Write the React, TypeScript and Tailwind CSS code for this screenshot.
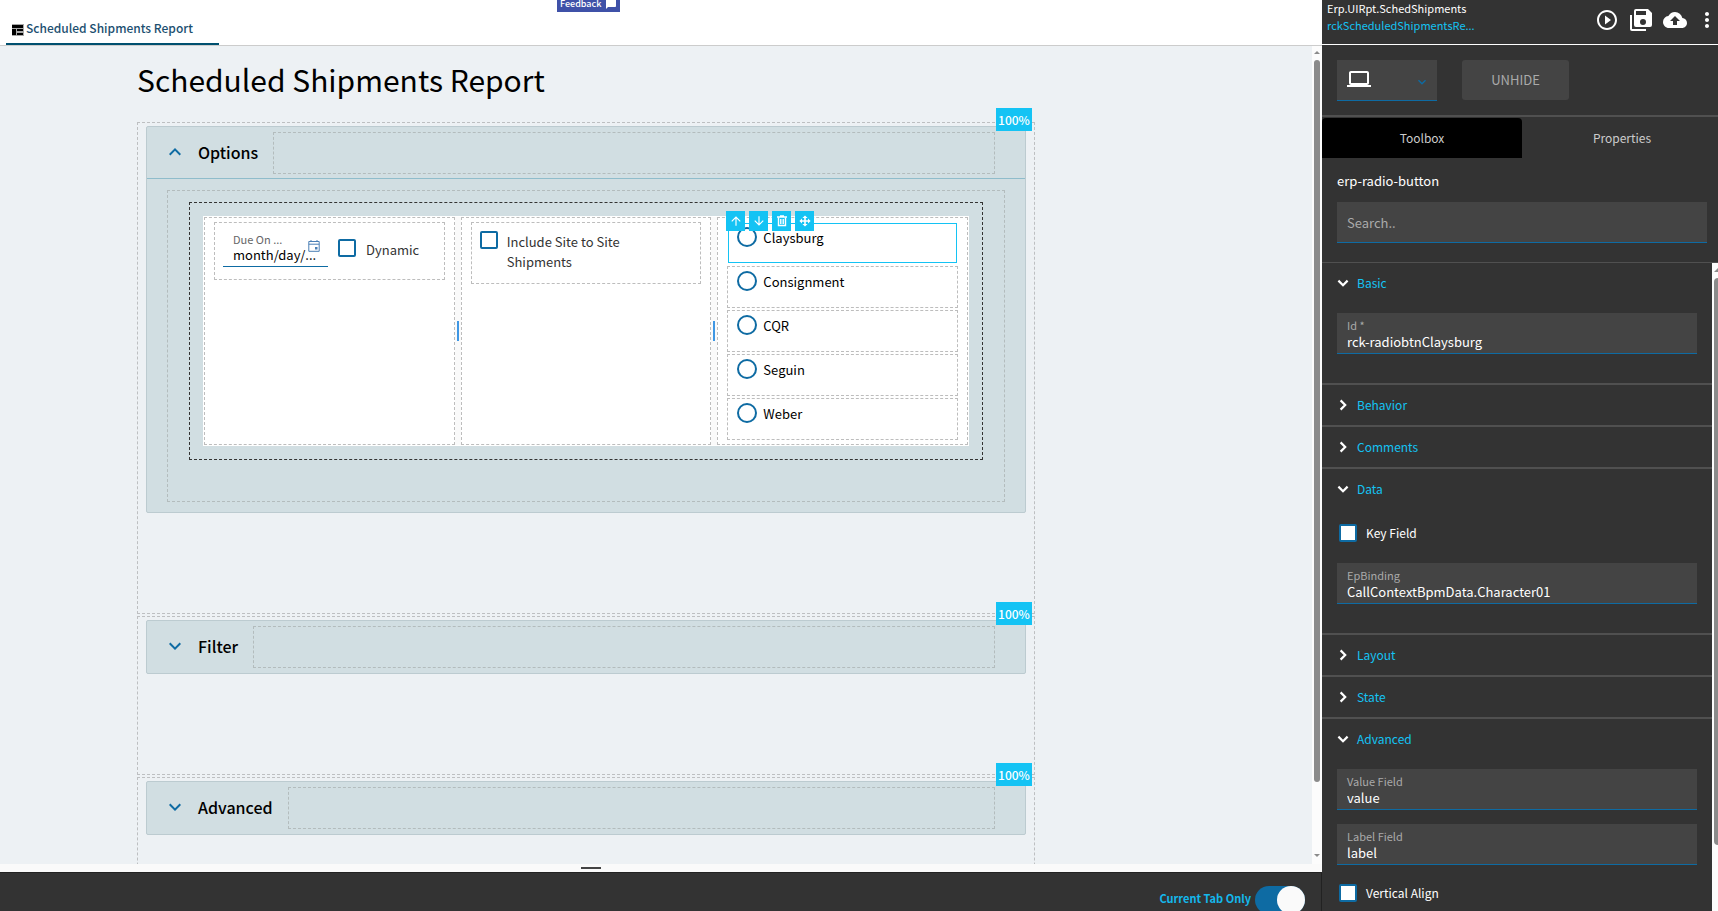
import type { ReactNode } from "react";
import {
    MdArrowDownward,
    MdArrowUpward,
    MdChatBubble,
    MdCloudUpload,
    MdExpandLess,
    MdExpandMore,
    MdLaptop,
    MdMoreVert,
    MdPlayCircleOutline,
} from "react-icons/md";

const sites = ["Claysburg", "Consignment", "CQR", "Seguin", "Weber"];

const checkboxClass = "h-[18px] w-[18px] shrink-0 appearance-none rounded-[2px] border-2 border-[#0e6ba3] bg-white";

function Chevron({ open }: { open: boolean }) {
    return (
        <svg viewBox="0 0 12 12" className="h-3 w-3 text-white" fill="none" stroke="currentColor" strokeWidth="2.2">
            <path d={open ? "M1.4 3.6L6 8.2l4.6-4.6" : "M3.6 1.4L8.2 6l-4.6 4.6"} />
        </svg>
    );
}

function Badge() {
    return (
        <span className="absolute -top-[15px] right-[2px] flex h-[23px] w-9 items-center justify-center bg-[#14c3f4] text-xs font-medium text-white">
            100%
        </span>
    );
}

function Card({ title, children }: { title: string; children?: ReactNode }) {
    const Icon = children ? MdExpandLess : MdExpandMore;
    return (
        <section className="relative mb-0.5 border border-dashed border-[#bdbfc1] px-2 pt-[3px] pb-[100px]">
            <div className="rounded-[2px] border border-[#bccbd0] bg-[#d1dee2]">
                <div className={children ? "flex h-[52px] border-b border-[#8fbccb] pt-[5px] pr-[30px]" : "flex h-[52px] pt-[5px] pr-[30px]"}>
                    <button type="button" className="flex h-10 items-center pl-4 text-base font-medium text-black">
                        <Icon className="mr-[11px] h-6 w-6 text-[#0e6ba3]" />
                        {title}
                    </button>
                    <div className="ml-[15px] h-[42px] flex-1 border border-dashed border-[#b3bcbd]" />
                </div>
                {children}
            </div>
            <Badge />
        </section>
    );
}

function Splitter() {
    return (
        <div className="flex w-[6px] items-center justify-center bg-[#fafafa]">
            <div className="h-5 w-0.5 bg-[#3f97e4]" />
        </div>
    );
}

function SiteToolbar() {
    const button = "flex h-5 w-[19px] items-center justify-center bg-[#14c3f4] text-white";
    return (
        <div className="absolute -top-[13px] -left-[3px] flex gap-1">
            <button type="button" aria-label="Move up" className={button}>
                <MdArrowUpward className="h-[14px] w-[14px]" />
            </button>
            <button type="button" aria-label="Move down" className={button}>
                <MdArrowDownward className="h-[14px] w-[14px]" />
            </button>
            <button type="button" aria-label="Delete" className={button}>
                <svg viewBox="0 0 12 12" className="h-3 w-3" fill="none" stroke="currentColor">
                    <path d="M1 2h10M4 1h4" strokeWidth="1.4" />
                    <path d="M2.5 2.5v8h7v-8" strokeWidth="1.4" />
                    <path d="M4.5 4v5M6 4v5M7.5 4v5" strokeWidth="0.9" />
                </svg>
            </button>
            <button type="button" aria-label="Drag" className={button}>
                <svg viewBox="0 0 12 12" className="h-3 w-3" fill="currentColor">
                    <path d="M6 0.4L8.6 3H6.8v2.2H9V3.4L11.6 6 9 8.6V6.8H6.8V9h1.8L6 11.6 3.4 9h1.8V6.8H3v1.8L0.4 6 3 3.4v1.8h2.2V3H3.4z" />
                </svg>
            </button>
        </div>
    );
}

function OptionsBody() {
    const column = "flex-1 border border-dashed border-[#bdbdbd] px-[9px] py-1";
    return (
        <div className="mx-5 mt-[11px] mb-[10px] border border-dashed border-[#b3bcbd] px-[21px] pt-[11px] pb-[41px]">
            <div className="border border-dashed border-[#333] p-[13px]">
                <div className="flex bg-white p-px text-[13px] leading-5 text-[#333]">
                    <div className={column}>
                        <div className="flex h-[58px] border border-dashed border-[#bdbdbd] pl-2">
                            <div className="relative h-11 w-[105px] border-b border-[#0e6ba3] pt-2 pl-[10px]">
                                <label htmlFor="dueOn" className="block text-[11px] leading-4 text-[#666]">
                                    Due On ...
                                </label>
                                <input
                                    id="dueOn"
                                    placeholder="month/day/..."
                                    className="block h-4 w-full bg-transparent text-[13px] placeholder:text-black"
                                />
                                <svg viewBox="0 0 12 12" className="absolute top-[17px] right-2 h-3 w-3 text-[#4a7fb5]" fill="none" stroke="currentColor">
                                    <path d="M0.8 1.5h10.4v9.8H0.8zM0.8 4.2h10.4M3 0v2M9 0v2" />
                                    <path d="M7 7h2.5v2.5H7z" fill="currentColor" stroke="none" />
                                </svg>
                            </div>
                            <label className="ml-[10px] flex items-start pt-4">
                                <input type="checkbox" className={checkboxClass} />
                                <span className="mt-px ml-[10px]">Dynamic</span>
                            </label>
                        </div>
                    </div>
                    <Splitter />
                    <div className={column}>
                        <label className="flex h-[62px] items-start border border-dashed border-[#bdbdbd] pt-2 pr-10 pl-2">
                            <input type="checkbox" className={checkboxClass} />
                            <span className="mt-px ml-[9px]">Include Site to Site Shipments</span>
                        </label>
                    </div>
                    <Splitter />
                    <div className={column + " flex flex-col gap-0.5"}>
                        {sites.map((site, i) => (
                            <div
                                key={site}
                                className={
                                    i === 0
                                        ? "relative m-px h-10 border border-[#14c3f4] pt-[3px] pl-2"
                                        : "relative h-[42px] border border-dashed border-[#bdbdbd] pt-1 pl-[9px]"
                                }
                            >
                                <label className="flex items-start text-black">
                                    <input
                                        type="radio"
                                        name="site"
                                        className="h-5 w-5 shrink-0 appearance-none rounded-full border-2 border-[#0e6ba3] bg-white"
                                    />
                                    <span className="mt-px ml-[6px]">{site}</span>
                                </label>
                                {i === 0 && <SiteToolbar />}
                            </div>
                        ))}
                    </div>
                </div>
            </div>
        </div>
    );
}

function Group({ title, children }: { title: string; children?: ReactNode }) {
    return (
        <div className="border-b-2 border-[#505050]">
            <button type="button" className="flex h-10 w-full items-center gap-2 pl-[15px] text-xs text-[#14c3f4]">
                <Chevron open={!!children} />
                {title}
            </button>
            {children && <div className="px-[15px] pt-[10px] pb-[15px]">{children}</div>}
        </div>
    );
}

function Field({ id, label, value }: { id: string; label: string; value: string }) {
    return (
        <div className="mb-[14px] h-[41px] border-b border-[#0e6ba3] bg-[#444] px-[10px] pt-1">
            <label htmlFor={id} className="block text-[11px] leading-4 text-[#aaa]">
                {label}
            </label>
            <input id={id} defaultValue={value} className="block h-[18px] w-full bg-transparent text-[13px] text-white" />
        </div>
    );
}

function CheckRow({ label }: { label: string }) {
    return (
        <label className="flex h-11 items-start pt-[5px] pl-0.5 text-xs leading-[18px] text-white">
            <input type="checkbox" className={checkboxClass} />
            <span className="ml-[9px]">{label}</span>
        </label>
    );
}

function Sidebar() {
    return (
        <aside className="flex w-[396px] shrink-0 flex-col bg-[#333] text-white">
            <header className="flex h-[45px] shrink-0 border-b border-white pl-[5px]">
                <div className="w-[268px] text-[11px] leading-[17px]">
                    <div>Erp.UIRpt.SchedShipments</div>
                    <a href="#" className="text-[#14c3f4]">
                        rckScheduledShipmentsRe...
                    </a>
                </div>
                <div className="flex h-10 items-center gap-[10px]">
                    <button type="button" aria-label="Preview">
                        <MdPlayCircleOutline className="h-6 w-6" />
                    </button>
                    <button type="button" aria-label="Save">
                        <svg viewBox="0 0 24 24" className="h-6 w-6" fill="currentColor">
                            <path d="M17 7V3H7v4h10m-3 10a3 3 0 0 0 3-3 3 3 0 0 0-3-3 3 3 0 0 0-3 3 3 3 0 0 0 3 3m5-16l4 4v12a2 2 0 0 1-2 2H7a2 2 0 0 1-2-2V3a2 2 0 0 1 2-2h12M1 7h2v14h14v2H3a2 2 0 0 1-2-2V7z" />
                        </svg>
                    </button>
                    <button type="button" aria-label="Publish">
                        <MdCloudUpload className="h-6 w-6" />
                    </button>
                    <button type="button" aria-label="More" className="flex w-5 justify-center">
                        <MdMoreVert className="h-6 w-6 shrink-0" />
                    </button>
                </div>
            </header>
            <div className="flex h-[72px] shrink-0 gap-[25px] border-b-2 border-[#505050] pt-[15px] pl-[15px]">
                <div className="relative h-[41px] w-[100px]">
                    <select aria-label="Device" className="h-full w-full appearance-none border-b border-[#0e6ba3] bg-[#444]" />
                    <MdLaptop className="pointer-events-none absolute top-[7px] left-[10px] h-6 w-6" />
                    <MdExpandMore className="pointer-events-none absolute top-[14px] right-[7px] h-4 w-4 text-[#0e6ba3]" />
                </div>
                <button type="button" className="h-10 w-[107px] rounded-[3px] bg-[#444] text-[13px] text-[#aaa]">
                    UNHIDE
                </button>
            </div>
            <div className="mt-px flex h-10 shrink-0 text-xs text-[#ccc]">
                <button type="button" className="w-[200px] shrink-0 rounded-t bg-black">
                    Toolbox
                </button>
                <button type="button" className="w-[200px] shrink-0">
                    Properties
                </button>
            </div>
            <div className="h-[105px] shrink-0 border-b border-[#505050] px-[15px] pt-[13px] pr-[11px]">
                <label htmlFor="search" className="block text-[13px] leading-5">
                    erp-radio-button
                </label>
                <input
                    id="search"
                    placeholder="Search.."
                    className="mt-[11px] h-[41px] w-full border-b border-[#0e6ba3] bg-[#444] px-[10px] text-[13px] placeholder:text-[#aaa]"
                />
            </div>
            <div className="flex min-h-0 flex-1">
                <div className="flex-1 overflow-hidden">
                    <Group title="Basic">
                        <Field id="fieldId" label="Id *" value="rck-radiobtnClaysburg" />
                    </Group>
                    <Group title="Behavior" />
                    <Group title="Comments" />
                    <Group title="Data">
                        <CheckRow label="Key Field" />
                        <Field id="epBinding" label="EpBinding" value="CallContextBpmData.Character01" />
                    </Group>
                    <Group title="Layout" />
                    <Group title="State" />
                    <Group title="Advanced">
                        <Field id="valueField" label="Value Field" value="value" />
                        <Field id="labelField" label="Label Field" value="label" />
                        <CheckRow label="Vertical Align" />
                    </Group>
                </div>
                <div className="flex w-[6px] flex-col items-end overflow-hidden bg-[#fcfcfc] pt-[5px] pb-[66px]">
                    <svg viewBox="0 0 4 4" className="mb-[6px] h-1 w-1 shrink-0" fill="#8b8b8b">
                        <path d="M0 4l4-4v4z" />
                    </svg>
                    <div className="w-1 flex-1 rounded-l bg-[#8b8b8b]" />
                </div>
            </div>
        </aside>
    );
}

export default function App() {
    return (
        <div className="flex h-screen overflow-hidden bg-white font-['Noto_Sans_CJK_SC',sans-serif]">
            <main className="flex min-w-0 flex-1 flex-col">
                <header className="relative flex h-[46px] shrink-0 items-end border-b border-[#ccc]">
                    <a
                        href="#"
                        className="ml-[6px] flex h-[41px] w-[213px] items-center gap-0.5 border-b-2 border-[#00506f] pt-2 pl-[6px] text-xs font-medium text-[#1c4f70]"
                    >
                        <svg viewBox="0 0 12 12" className="mt-1 h-3 w-3">
                            <path d="M0 0h12v12H0z" fill="#a8a8a8" />
                            <path d="M0 1h11v3H0zM0 5h4v6H0zM5 5h6v2H5zM5 9h6v2H5z" fill="#000" />
                        </svg>
                        Scheduled Shipments Report
                    </a>
                    <button
                        type="button"
                        className="absolute top-0 left-[557px] flex h-3 w-[63px] items-start justify-between bg-[#3f51a8] px-[3px] text-[9px] leading-[8px] font-medium text-white"
                    >
                        Feedback
                        <span className="h-[9px] overflow-hidden">
                            <MdChatBubble className="-mt-0.5 h-3 w-3" />
                        </span>
                    </button>
                </header>
                <div className="flex min-h-0 flex-1">
                    <div className="flex-1 overflow-hidden bg-[#edf1f4] px-[137px]">
                        <h1 className="pt-[13px] pb-[23px] text-[30px] leading-10 font-normal text-black">Scheduled Shipments Report</h1>
                        <div className="max-w-[898px]">
                            <Card title="Options">
                                <OptionsBody />
                            </Card>
                            <Card title="Filter" />
                            <Card title="Advanced" />
                        </div>
                    </div>
                    <div className="flex w-[10px] flex-col items-center bg-[#fcfcfc] py-[5px]">
                        <svg viewBox="0 0 6 3" className="mb-[6px] h-[3px] w-[6px] shrink-0" fill="#8b8b8b">
                            <path d="M0 3l3-3 3 3z" />
                        </svg>
                        <div className="mb-[72px] w-[6px] flex-1 rounded-full bg-[#8b8b8b]" />
                        <svg viewBox="0 0 6 3" className="mb-0.5 h-[3px] w-[6px] shrink-0" fill="#8b8b8b">
                            <path d="M0 0l3 3 3-3z" />
                        </svg>
                    </div>
                </div>
                <div className="flex h-2 shrink-0 justify-center bg-[#fafafa] pt-[3px] pr-[140px]">
                    <div className="h-0.5 w-5 bg-[#444]" />
                </div>
                <footer className="flex h-[39px] shrink-0 items-start justify-end overflow-hidden border-t border-r border-[#222] bg-[#333] pt-[13px] pr-4">
                    <label className="flex text-[11px] leading-6 font-bold text-[#14b8ec]">
                        Current Tab Only
                        <span className="relative ml-1 block h-[28px] w-[50px]">
                            <input type="checkbox" role="switch" defaultChecked className="block h-[28px] w-[50px] appearance-none rounded-full bg-[#0e6ba3]" />
                            <span className="absolute top-0 right-0 h-[28px] w-[28px] rounded-full bg-[#fafafa]" />
                        </span>
                    </label>
                </footer>
            </main>
            <Sidebar />
        </div>
    );
}
